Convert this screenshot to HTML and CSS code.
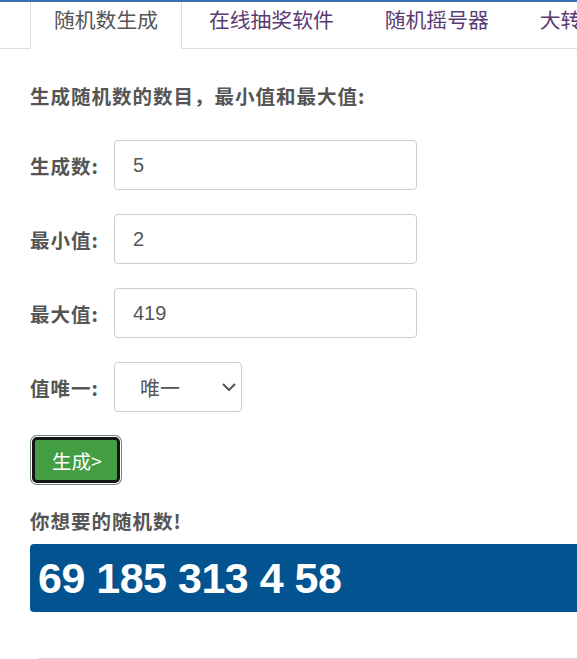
FILE: index.html
```html
<!DOCTYPE html>
<html lang="zh-CN">
<head>
<meta charset="utf-8">
<title>随机数生成</title>
<link rel="stylesheet" href="styles.css">
</head>
<body>
<div class="page">
  <ul class="tabs">
    <li class="tab active">随机数生成</li>
    <li class="tab">在线抽奖软件</li>
    <li class="tab">随机摇号器</li>
    <li class="tab">大转盘抽奖</li>
  </ul>
  <div class="content">
    <h3 class="title">生成随机数的数目，最小值和最大值:</h3>
    <div class="row">
      <label class="label">生成数:</label>
      <input class="field" type="text" value="5">
    </div>
    <div class="row">
      <label class="label">最小值:</label>
      <input class="field" type="text" value="2">
    </div>
    <div class="row">
      <label class="label">最大值:</label>
      <input class="field" type="text" value="419">
    </div>
    <div class="row">
      <label class="label">值唯一:</label>
      <div class="select-wrap">
        <select class="choice">
          <option>唯一</option>
          <option>可重复</option>
        </select>
        <svg class="chev" width="14" height="8" viewBox="0 0 14 8"><path d="M1 1 L7 7 L13 1" fill="none" stroke="#555" stroke-width="2"/></svg>
      </div>
    </div>
    <div class="actions">
      <button class="go" type="button">生成&gt;</button>
    </div>
    <h3 class="title result-title">你想要的随机数!</h3>
    <div class="result">69 185 313 4 58</div>
    <div class="rule"></div>
  </div>
</div>
</body>
</html>
```
FILE: styles.css
```css
html, body {
  margin: 0;
  padding: 0;
  overflow: hidden;
  background: #fff;
}
body {
  font-family: "Liberation Sans", "Noto Sans CJK SC", sans-serif;
  color: #555;
}
.page {
  border-top: 2px solid #3a6fb3;
  width: 820px;
}
.tabs {
  list-style: none;
  margin: 0;
  padding: 0 0 0 30px;
  display: flex;
  border-bottom: 1px solid #ddd;
}
.tab {
  font-family: "Noto Sans CJK SC", sans-serif;
  font-size: 20.8px;
  line-height: 31px;
  padding: 2px 23px 13px;
  border: 1px solid transparent;
  border-top: 0;
  margin-right: 3px;
  margin-bottom: -1px;
  color: #5a3a73;
  white-space: nowrap;
}
.tab.active {
  color: #555;
  border-color: #ddd;
  border-bottom-color: #fff;
  background: #fff;
}
.content {
  padding-left: 30px;
}
.title {
  margin: 35px 0 32px;
  font-family: "Noto Sans CJK SC", sans-serif;
  font-size: 19.5px;
  line-height: 24px;
  letter-spacing: 1px;
  font-weight: 700;
  color: #555;
}
.row {
  display: flex;
  align-items: center;
  margin-bottom: 24px;
  height: 50px;
}
.label {
  width: 84px;
  flex: none;
  font-family: "Noto Sans CJK SC", sans-serif;
  font-size: 19.5px;
  letter-spacing: 1px;
  font-weight: 700;
  color: #555;
}
.field {
  box-sizing: border-box;
  width: 303px;
  height: 50px;
  border: 1px solid #ccc;
  border-radius: 4px;
  padding: 0 0 0 18px;
  font-family: "Liberation Sans", sans-serif;
  font-size: 20px;
  color: #555;
  outline: none;
}
.select-wrap {
  position: relative;
  width: 128px;
  height: 50px;
}
.choice {
  appearance: none;
  -webkit-appearance: none;
  box-sizing: border-box;
  width: 128px;
  height: 50px;
  border: 1px solid #ccc;
  border-radius: 4px;
  padding: 0 0 0 25px;
  font-family: "Noto Sans CJK SC", sans-serif;
  font-size: 20px;
  color: #555;
  background: #fff;
}
.chev {
  position: absolute;
  left: 108px;
  top: 21px;
  pointer-events: none;
}
.actions {
  margin-top: -1px;
  height: 50px;
  display: flex;
  align-items: center;
}
.go {
  box-sizing: border-box;
  margin-left: 2px;
  width: 88px;
  height: 46px;
  border: 3px solid #141414;
  border-radius: 5px;
  background: #439e43;
  color: #fff;
  font-family: "Noto Sans CJK SC", sans-serif;
  font-size: 19.5px;
  padding: 0 0 0 2px;
  box-shadow: 0 0 0 1px #fff, 0 0 0 2px #6f8a6f;
}
.result-title {
  margin: 24px 0 11px;
}
.result {
  height: 68px;
  box-sizing: border-box;
  background: #02538f;
  border-radius: 4px;
  color: #fff;
  font-family: "Liberation Sans", sans-serif;
  font-weight: 700;
  font-size: 43px;
  letter-spacing: -0.5px;
  line-height: 68px;
  padding-left: 8px;
  white-space: nowrap;
}
.rule {
  margin: 46px 0 0 8px;
  border-top: 1px solid #ddd;
}
```
